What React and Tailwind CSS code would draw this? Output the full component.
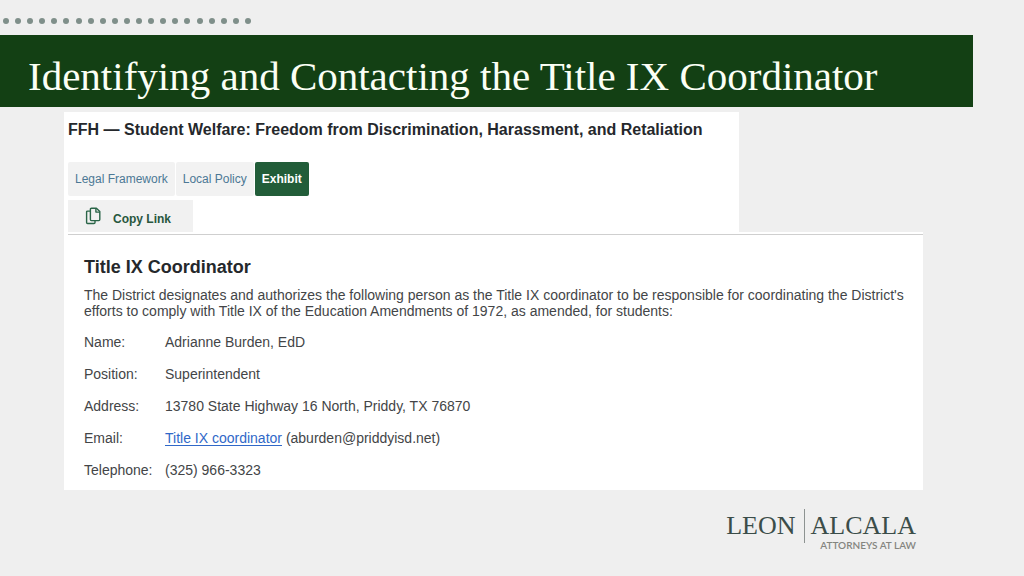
const details = [
  { label: "Name:", value: "Adrianne Burden, EdD" },
  { label: "Position:", value: "Superintendent" },
  { label: "Address:", value: "13780 State Highway 16 North, Priddy, TX 76870" },
  {
    label: "Email:",
    value: (
      <>
        <a href="mailto:aburden@priddyisd.net" className="text-[#3068c8] underline underline-offset-2">
          Title IX coordinator
        </a>{" "}
        (aburden@priddyisd.net)
      </>
    ),
  },
  { label: "Telephone:", value: "(325) 966-3323" },
];

function DotRow() {
  return (
    <div className="ml-[3px] flex w-[248px] max-w-full justify-between" aria-hidden="true">
      {Array.from({ length: 21 }, (_, i) => (
        <span key={i} className="size-1.5 rounded-full bg-[#7f8f8a]" />
      ))}
    </div>
  );
}

function CopyIcon() {
  return (
    <svg viewBox="0 0 16 18" className="h-[18px] w-4" fill="none" stroke="#2a6548" strokeWidth="1.4" strokeLinejoin="round" aria-hidden="true">
      <path d="M6.4 1.2h5l3.4 3.4v8q0 1-1 1H6.4q-1 0-1-1V2.2q0-1 1-1z" />
      <path d="M10.9 1.2v3.9h3.9" />
      <path d="M5.4 4.1H2.6q-1 0-1 1v10.4q0 1 1 1h6.4q1 0 1-1v-1.9" />
    </svg>
  );
}

function PolicyHeader() {
  return (
    <section className="mr-[184px] bg-white pt-2 pl-1">
      <h2 className="text-base leading-5 font-bold whitespace-nowrap text-[#25282c]">
        FFH — Student Welfare: Freedom from Discrimination, Harassment, and Retaliation
      </h2>
      <nav className="mt-[22px] flex gap-px text-xs">
        <button type="button" className="h-[34px] rounded-xs bg-[#f2f2f2] px-[7px] text-[#4c7895]">Legal Framework</button>
        <button type="button" className="h-[34px] rounded-xs bg-[#f2f2f2] px-[7px] text-[#4c7895]">Local Policy</button>
        <button type="button" aria-current="page" className="h-[34px] rounded-xs bg-[#225d39] px-[7px] font-bold text-white">
          Exhibit
        </button>
      </nav>
      <button type="button" className="mt-1 flex h-8 w-[125px] items-center gap-3 bg-[#f1f1f1] pl-[17px] text-xs font-bold text-[#28573e]">
        <CopyIcon />
        <span className="pt-1.5">Copy Link</span>
      </button>
    </section>
  );
}

function CoordinatorCard() {
  return (
    <section className="bg-white pt-0.5 pb-3 pl-1">
      <hr className="border-[#cfcfcf]" />
      <div className="pt-5 pl-4 text-[14px] leading-4 text-[#434547]">
        <h3 className="text-lg leading-6 font-bold text-[#25282b]">Title IX Coordinator</h3>
        <p className="mt-2 whitespace-nowrap">
          The District designates and authorizes the following person as the Title IX coordinator to be responsible for coordinating the District's
          <br />
          efforts to comply with Title IX of the Education Amendments of 1972, as amended, for students:
        </p>
        <dl className="mt-[15px] grid grid-cols-[81px_1fr] gap-y-4">
          {details.map(({ label, value }) => (
            <div key={label} className="col-span-2 grid grid-cols-subgrid">
              <dt>{label}</dt>
              <dd>{value}</dd>
            </div>
          ))}
        </dl>
      </div>
    </section>
  );
}

function Logo() {
  return (
    <footer className="mt-[19px] mr-[108px] flex justify-end font-['Liberation_Serif',serif] text-[26px] leading-[34px] text-[#3b4d49]">
      <span className="pr-2">LEON</span>
      <div className="h-[34px] border-l border-[#8d9391] pl-1.5">
        <div>ALCALA</div>
        <div className="-mt-1 text-right font-[Lato,sans-serif] text-[10px] leading-3 font-semibold text-[#84857f]">
          ATTORNEYS AT LAW
        </div>
      </div>
    </footer>
  );
}

export default function App() {
  return (
    <div className="min-h-screen bg-[#efefef] pt-[18px] font-['Liberation_Sans',Arial,sans-serif]">
      <DotRow />
      <header className="mt-[11px] mr-[51px] bg-[#134014] pt-4 pr-4 pb-1.5 pl-7">
        <h1 className="font-['Liberation_Serif',serif] text-[41px] leading-[50px] whitespace-nowrap text-[#fbfff5]">
          Identifying and Contacting the Title IX Coordinator
        </h1>
      </header>
      <main className="mt-[5px] mr-[101px] ml-16">
        <PolicyHeader />
        <CoordinatorCard />
      </main>
      <Logo />
    </div>
  );
}
